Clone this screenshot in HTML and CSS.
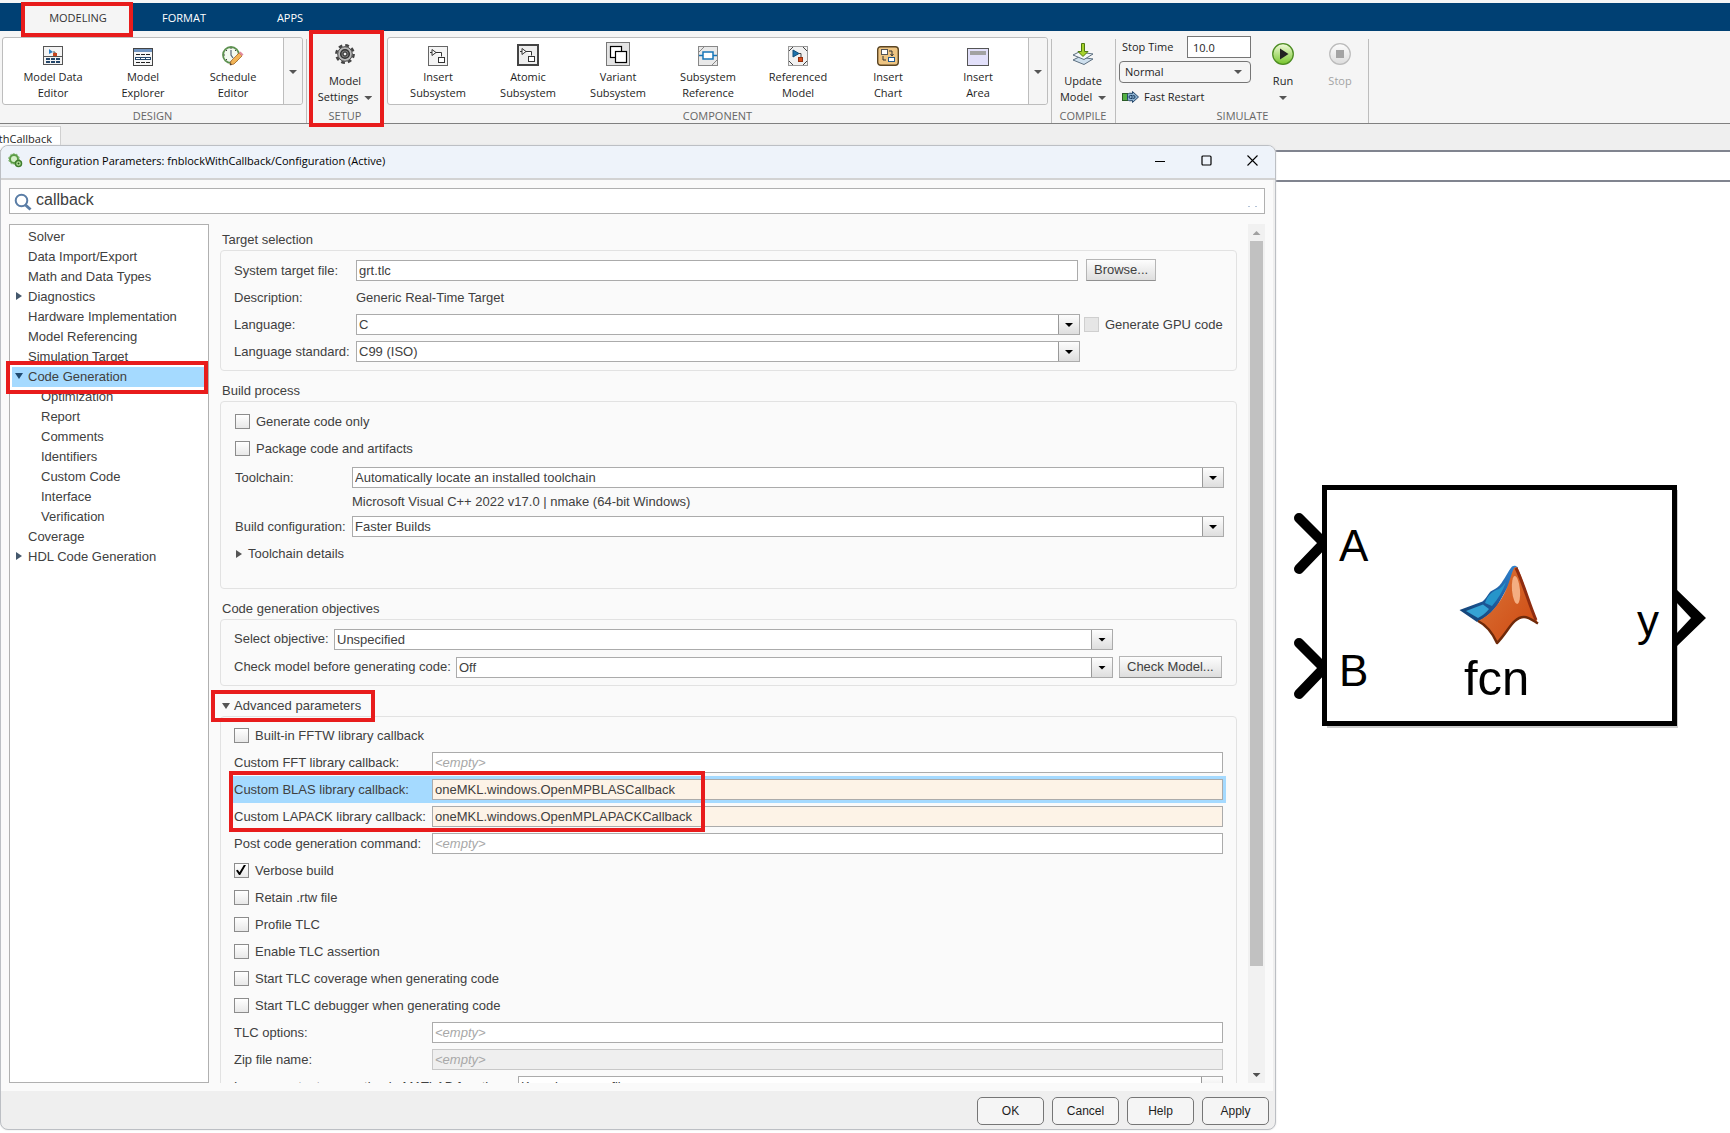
FILE: index.html
```html
<!DOCTYPE html>
<html lang="en">
<head>
<meta charset="utf-8">
<title>Configuration Parameters</title>
<link rel="stylesheet" href="styles.css">
</head>
<body>
<div class="app">
  <nav class="tabs">
    <button class="tab tab-active">MODELING<span class="mark mark-tab"></span></button>
    <button class="tab tab-format">FORMAT</button>
    <button class="tab tab-apps">APPS</button>
  </nav>

  <div class="ribbon">
    <section class="group group-design">
      <div class="gallery">
        <button class="item">
          <svg width="20" height="20" viewBox="0 0 20 20"><rect x=".5" y=".5" width="19" height="18" fill="#f4f4f4" stroke="#555"/><path d="M6 3l4 3-4 2z" fill="#2b7fc4"/><path d="M10 6h2v2" fill="none" stroke="#555"/><rect x="10" y="7" width="4" height="3" fill="#c8431e"/><path d="M1 10.500h18" stroke="#555"/><path d="M3 13h4m1 0h4m1 0h4M3 16h4m1 0h4m1 0h4" stroke="#24476b" stroke-width="2"/></svg>
          <span>Model Data<br>Editor</span></button>
        <button class="item">
          <svg width="20" height="20" viewBox="0 0 20 20"><rect x=".5" y="2.500" width="19" height="17" fill="#f6f6f6" stroke="#444"/><rect x="1" y="3" width="18" height="3" fill="#6f93bf"/><path d="M3 8.500h4m1 0h4m1 0h4M3 16.500h4m1 0h4m1 0h4" stroke="#222"/><rect x="2" y="11" width="16" height="3" fill="#24476b"/><path d="M3 12.500h4m1 0h4m1 0h4" stroke="#fff"/></svg>
          <span>Model<br>Explorer</span></button>
        <button class="item">
          <svg width="22" height="20" viewBox="0 0 22 20"><circle cx="9" cy="9" r="8" fill="#f3faf0" stroke="#5d9150" stroke-width="1.800"/><path d="M9 4v5l2 3" fill="none" stroke="#567" stroke-width="1.200"/><path d="M9 2v1M9 15v1M2 9h1M15 9h1M4 4l1 1M4 14l1-1M14 4l-1 1" stroke="#444"/><path d="M9 15L17 7l3 3-8 8-4 1z" fill="#f2b456" stroke="#a5672a" stroke-width=".8"/><path d="M17 7l1.500-1.500 3 3L20 10z" fill="#e28a9d"/><path d="M8 19l.6-2 1.400 1.500z" fill="#333"/></svg>
          <span>Schedule<br>Editor</span></button>
        <button class="more" aria-label="More design tools"><i class="caret"></i></button>
      </div>
      <h2>DESIGN</h2>
    </section>

    <section class="group group-setup">
      <button class="big">
        <svg width="20" height="20" viewBox="0 0 20 20"><circle cx="10" cy="10" r="8.700" fill="none" stroke="#444" stroke-width="2.400" stroke-dasharray="3.800 3.030"/><circle cx="10" cy="10" r="7.300" fill="#b8b8b8" stroke="#444"/><circle cx="10" cy="10" r="4.300" fill="#777" stroke="#333" stroke-width="1.500"/><circle cx="10" cy="10" r="2" fill="#f2f2f2" stroke="#222"/></svg>
        <span>Model<br>Settings <i class="caret"></i></span>
      </button>
      <h2>SETUP</h2>
      <span class="mark mark-setup"></span>
    </section>

    <section class="group group-component">
      <div class="gallery">
        <button class="item">
          <svg width="20" height="20" viewBox="0 0 20 20"><rect x=".5" y=".5" width="19" height="19" fill="#f4f4f4" stroke="#666"/><path d="M4 3.500v6l4-3zM2 6.500h2M8 6.500h5.500v4" fill="#fff" stroke="#333"/><rect x="10.500" y="11.500" width="6" height="5" fill="#fff" stroke="#333"/></svg>
          <span>Insert<br>Subsystem</span></button>
        <button class="item">
          <svg width="22" height="22" viewBox="0 0 22 22"><rect x="1" y="1" width="20" height="20" fill="#eee" stroke="#444" stroke-width="2"/><path d="M5 4.500v6l4-3zM3 7.500h2M9 7.500h5.500v4" fill="#fff" stroke="#333"/><rect x="11.500" y="12.500" width="6" height="5" fill="#fff" stroke="#333"/></svg>
          <span>Atomic<br>Subsystem</span></button>
        <button class="item">
          <svg width="24" height="24" viewBox="0 0 24 24"><rect x=".5" y=".5" width="23" height="23" fill="#e4e4e4" stroke="#777"/><rect x="4.500" y="4.500" width="11" height="11" fill="#fff" stroke="#000" stroke-width="1.200"/><rect x="9.500" y="9.500" width="11" height="11" fill="#fff" stroke="#000" stroke-width="1.200"/></svg>
          <span>Variant<br>Subsystem</span></button>
        <button class="item">
          <svg width="20" height="20" viewBox="0 0 20 20"><rect x=".5" y=".5" width="19" height="19" fill="#e9e9e9" stroke="#888"/><path d="M1 6l5-5M14 19l5-5" stroke="#888"/><path d="M1 9.500h4M15 9.500h4" stroke="#1676b8" stroke-width="1.500"/><rect x="5" y="6" width="10" height="7" fill="#fff" stroke="#1676b8" stroke-width="1.500"/></svg>
          <span>Subsystem<br>Reference</span></button>
        <button class="item">
          <svg width="20" height="20" viewBox="0 0 20 20"><rect x=".5" y=".5" width="19" height="19" fill="#f1f1f1" stroke="#999"/><path d="M1 5l4-4M15 1l4 4M1 15l4 4M15 19l4-4" stroke="#444"/><path d="M5 4l6 3.500L5 11z" fill="#1c73ad" stroke="#124d78"/><path d="M11 7.500h2v4" fill="none" stroke="#444"/><rect x="10.500" y="11.500" width="4" height="4" fill="#da4c1b" stroke="#92300f"/></svg>
          <span>Referenced<br>Model</span></button>
        <button class="item">
          <svg width="22" height="20" viewBox="0 0 22 20"><rect x=".7" y=".7" width="20.600" height="18.600" rx="3" fill="#eec583" stroke="#5b4523" stroke-width="1.400"/><rect x="4.500" y="3.500" width="6" height="5" fill="#fff" stroke="#555"/><rect x="11.500" y="11.500" width="6" height="4" fill="#fff" stroke="#24588a"/><path d="M12 5h3v4M6 10v4h3M13.500 8l1.500 2 1.500-2" fill="none" stroke="#333"/></svg>
          <span>Insert<br>Chart</span></button>
        <button class="item">
          <svg width="22" height="18" viewBox="0 0 22 18"><rect x=".5" y=".5" width="21" height="17" fill="#e2e0fa" stroke="#555"/><rect x="3" y="3" width="16" height="4" fill="#a2a2a2"/></svg>
          <span>Insert<br>Area</span></button>
        <button class="more" aria-label="More components"><i class="caret"></i></button>
      </div>
      <h2>COMPONENT</h2>
    </section>

    <section class="group group-compile">
      <button class="big">
        <svg width="22" height="22" viewBox="0 0 22 22"><path d="M1 17l6-3 14 2-9 5.500z" fill="#cfe0ee" stroke="#5c6f80"/><path d="M1 12l6-3 14 2-9 5.500z" fill="#f4f7fa" stroke="#5c6f80"/><path d="M9.500.5h3v8h3.500L11 13.500 6 8.500h3.500z" fill="#a6d22c" stroke="#4f7a10"/></svg>
        <span>Update<br>Model <i class="caret"></i></span>
      </button>
      <h2>COMPILE</h2>
    </section>

    <section class="group group-simulate">
      <div class="sim">
        <div class="sim-form">
          <div class="stop-row"><label for="stop">Stop Time</label><input id="stop" value="10.0"></div>
          <div class="mode"><select aria-label="Simulation mode"><option>Normal</option></select><i class="caret"></i></div>
          <button class="fast"><svg width="17" height="12" viewBox="0 0 17 12"><rect x=".5" y="2.500" width="5" height="7" fill="#52b043" stroke="#2b5c27"/><path d="M5.500 3.500c1-1.500 3-1.500 5-1V.5L16.500 6l-6 5.500v-2c-2 .5-4 .5-5-1z" fill="#8fb4d3" stroke="#24476b"/><path d="M10 4.500H8.500a1.500 1.500 0 0 0 0 3H10M10.500 4.500h1a1.500 1.500 0 0 1 0 3h-1M9 6h2.500" fill="none" stroke="#16395c"/></svg>Fast Restart</button>
        </div>
        <button class="big run">
          <svg width="22" height="22" viewBox="0 0 22 22"><defs><linearGradient id="g" x2="0" y2="1"><stop stop-color="#f2fbdc"/><stop offset="1" stop-color="#76c52a"/></linearGradient><linearGradient id="s" x2="0" y2="1"><stop stop-color="#fdfdfd"/><stop offset="1" stop-color="#dcdcdc"/></linearGradient></defs><circle cx="11" cy="11" r="10.300" fill="url(#g)" stroke="#4d8d22" stroke-width="1.300"/><path d="M8 5.500l8.500 5.500L8 16.500z" fill="#222"/></svg>
          <span>Run<br><i class="caret"></i></span>
        </button>
        <button class="big stop" disabled>
          <svg width="22" height="22" viewBox="0 0 22 22"><circle cx="11" cy="11" r="10.300" fill="url(#s)" stroke="#bbb" stroke-width="1.200"/><rect x="7" y="7" width="8" height="8" fill="#a3a3a3"/></svg>
          <span>Stop</span>
        </button>
      </div>
      <h2>SIMULATE</h2>
    </section>
  </div>

  <div class="docbar"><div class="doctab"><span>thCallback</span></div></div>
  <div class="pathbar"></div>

  <main class="canvas">
    <svg class="block" width="420" height="260" viewBox="1290 475 420 260">
      <rect x="1327" y="490" width="351" height="238" fill="#ccc"/>
      <path d="M1299 518l25 25-25 26M1299 643l25 25-25 26" fill="none" stroke="#000" stroke-width="10" stroke-linecap="round"/>
      <path d="M1676 589l30 29-30 29v-13l15-16-15-16z"/>
      <rect x="1324.500" y="487.500" width="350" height="236" fill="#fff" stroke="#000" stroke-width="5"/>
      <defs>
        <linearGradient id="orange" x1="0" y1="0" x2="1" y2="1"><stop stop-color="#d9763a"/><stop offset="1" stop-color="#cf470f"/></linearGradient>
        <linearGradient id="blue" x1="1" y1="0" x2="0" y2="1"><stop stop-color="#2f86d2"/><stop offset=".5" stop-color="#1f5c9e"/><stop offset="1" stop-color="#123f70"/></linearGradient>
      </defs>
      <path d="M1459.500 610l23-8.500c4-3 5-7 8-10 3-2 6-3 9-6 5-6 9-15 12.500-19 2-1.500 4-1 6 1l-6 12-14 25c-6 8-13 14-21 17.500z" fill="url(#blue)"/>
      <path d="M1466 611l17-6.500 6 4.500c-3 4-7 7-11 9z" fill="#35a3d4"/>
      <path d="M1485 603c3-9 8-12 14-14 3-2 4-4 7-7-3 9-8 17-14 24z" fill="#2695ca"/>
      <path d="M1478 621c12-5 21-17 26-27 5-9 7-20 10-26 2-2 3-1 4 1 6 13 12 36 20 54.500-5-3-9-6.500-14-6.500-11 0-16 15-27 26-4-9-9-17-19-22z" fill="url(#orange)"/>
      <path d="M1478 621c10 5 15 13 19 22 11-11 16-26 27-26 5 0 9 3.500 14 6.500" fill="none" stroke="#6f2a0a" stroke-width="2.500" stroke-linejoin="round"/>
      <path d="M1516 568c7 14 13 36 20 52" stroke="#8f2c10" stroke-width="3" fill="none"/>
      <ellipse cx="1516" cy="590" rx="4" ry="14" fill="#f4ae82" transform="rotate(-5 1516 590)"/>
      <g font-family="Liberation Sans, Arial, sans-serif" font-size="44">
        <text x="1339" y="561">A</text><text x="1339" y="686">B</text><text x="1637" y="636">y</text>
        <text x="1464" y="695" font-size="49">fcn</text>
      </g>
    </svg>
  </main>
</div>

<div class="dialog" role="dialog" aria-label="Configuration Parameters">
  <header class="titlebar">
    <svg width="15" height="15" viewBox="0 0 15 15"><circle cx="6" cy="6" r="4" fill="#d5efc8" stroke="#5b9c45" stroke-width="2"/><circle cx="6" cy="6" r="5.300" fill="none" stroke="#76ad62" stroke-dasharray="2 1.300"/><circle cx="10.500" cy="10.500" r="3" fill="#b7e39d" stroke="#3f7d2c" stroke-width="1.500"/><circle cx="10.500" cy="10.500" r="1" fill="#29561d"/></svg>
    <span class="title">Configuration Parameters: fnblockWithCallback/Configuration (Active)</span>
    <button aria-label="Minimize"><svg width="11" height="11" viewBox="0 0 11 11"><path d="M0 6.500h10" stroke="#000"/></svg></button>
    <button aria-label="Maximize"><svg width="11" height="11" viewBox="0 0 11 11"><rect x="1" y="1" width="9" height="9" rx="1" fill="none" stroke="#000" stroke-width="1.200"/></svg></button>
    <button aria-label="Close"><svg width="11" height="11" viewBox="0 0 11 11"><path d="M.5.5l10 10M10.500.5l-10 10" stroke="#000" stroke-width="1.100"/></svg></button>
  </header>

  <div class="body">
    <div class="search">
      <svg width="18" height="18" viewBox="0 0 18 18"><circle cx="7.500" cy="7.500" r="5.800" fill="#fff" stroke="#5a7da6" stroke-width="2"/><path d="M11.500 12l5 4.500" stroke="#5a7da6" stroke-width="3"/></svg>
      <input aria-label="Search" value="callback">
      <svg class="dots" width="12" height="20" viewBox="0 0 12 20"><path d="M1 17.500h2M8 17.500h2" stroke="#b3c3d8"/></svg>
    </div>

    <div class="columns">
      <ul class="tree">
        <li>Solver</li>
        <li>Data Import/Export</li>
        <li>Math and Data Types</li>
        <li class="closed">Diagnostics</li>
        <li>Hardware Implementation</li>
        <li>Model Referencing</li>
        <li>Simulation Target</li>
        <li class="open selected">Code Generation<span class="mark mark-tree"></span></li>
        <li class="child">Optimization</li>
        <li class="child">Report</li>
        <li class="child">Comments</li>
        <li class="child">Identifiers</li>
        <li class="child">Custom Code</li>
        <li class="child">Interface</li>
        <li class="child">Verification</li>
        <li>Coverage</li>
        <li class="closed">HDL Code Generation</li>
      </ul>

      <div class="pane">
        <h3 class="first">Target selection</h3>
        <div class="box target">
          <div class="row"><label for="stf">System target file:</label><input class="field" id="stf" value="grt.tlc"><div class="side side-browse"><button class="btn">Browse...</button></div></div>
          <div class="row"><span class="label">Description:</span><span>Generic Real-Time Target</span></div>
          <div class="row"><label for="lang">Language:</label><div class="combo"><select id="lang"><option>C</option></select></div><div class="side"><input type="checkbox" id="gpu" disabled><label class="tick" for="gpu">Generate GPU code</label></div></div>
          <div class="row"><label for="std">Language standard:</label><div class="combo"><select id="std"><option>C99 (ISO)</option></select></div><div class="side"></div></div>
        </div>

        <h3>Build process</h3>
        <div class="box build">
          <div class="row"><input type="checkbox" id="gco"><label class="tick" for="gco">Generate code only</label></div>
          <div class="row"><input type="checkbox" id="pca"><label class="tick" for="pca">Package code and artifacts</label></div>
          <div class="row spaced"><label for="tc">Toolchain:</label><div class="combo"><select id="tc"><option>Automatically locate an installed toolchain</option></select></div></div>
          <div class="row low"><span class="label"></span><span>Microsoft Visual C++ 2022 v17.0 | nmake (64-bit Windows)</span></div>
          <div class="row"><label for="bc">Build configuration:</label><div class="combo"><select id="bc"><option>Faster Builds</option></select></div></div>
          <div class="row"><button class="details">Toolchain details</button></div>
        </div>

        <h3>Code generation objectives</h3>
        <div class="box objectives">
          <div class="row"><label for="so">Select objective:</label><div class="combo"><select id="so"><option>Unspecified</option></select></div><div class="side"></div></div>
          <div class="row"><label class="wide" for="cm">Check model before generating code:</label><div class="combo"><select id="cm"><option>Off</option></select></div><div class="side"><button class="btn">Check Model...</button></div></div>
        </div>

        <h3 class="advanced-title"><button>Advanced parameters</button><span class="mark mark-advanced"></span></h3>
        <div class="box advanced">
          <div class="row"><input type="checkbox" id="fftw"><label class="tick" for="fftw">Built-in FFTW library callback</label></div>
          <div class="row"><label for="fft">Custom FFT library callback:</label><input class="field" id="fft" placeholder="&lt;empty&gt;"></div>
          <div class="row hit"><label for="blas">Custom BLAS library callback:</label><input class="field changed" id="blas" value="oneMKL.windows.OpenMPBLASCallback"><span class="mark mark-callbacks"></span></div>
          <div class="row"><label for="lapack">Custom LAPACK library callback:</label><input class="field changed" id="lapack" value="oneMKL.windows.OpenMPLAPACKCallback"></div>
          <div class="row"><label for="post">Post code generation command:</label><input class="field" id="post" placeholder="&lt;empty&gt;"></div>
          <div class="row"><input type="checkbox" id="vb" checked><label class="tick" for="vb">Verbose build</label></div>
          <div class="row"><input type="checkbox" id="rtw"><label class="tick" for="rtw">Retain .rtw file</label></div>
          <div class="row"><input type="checkbox" id="prof"><label class="tick" for="prof">Profile TLC</label></div>
          <div class="row"><input type="checkbox" id="asrt"><label class="tick" for="asrt">Enable TLC assertion</label></div>
          <div class="row"><input type="checkbox" id="cov"><label class="tick" for="cov">Start TLC coverage when generating code</label></div>
          <div class="row"><input type="checkbox" id="dbg"><label class="tick" for="dbg">Start TLC debugger when generating code</label></div>
          <div class="row"><label for="tlc">TLC options:</label><input class="field" id="tlc" placeholder="&lt;empty&gt;"></div>
          <div class="row"><label for="zip">Zip file name:</label><input class="field" id="zip" placeholder="&lt;empty&gt;" disabled></div>
          <div class="row"><label class="wide" for="lcg">Large constant generation in MATLAB functions:</label><div class="combo"><select id="lcg"><option>Keep in source files</option></select></div></div>
        </div>
      </div>

      <div class="scrollbar"><i class="up"></i><div class="thumb"></div><i class="down"></i></div>
    </div>
  </div>

  <footer><button>OK</button><button>Cancel</button><button>Help</button><button>Apply</button></footer>
</div>
</body>
</html>
```
FILE: styles.css
```css
* { box-sizing: border-box; }
body { margin: 0; min-height: 100vh; position: relative; overflow: hidden; font: 13px/20px "Liberation Sans", Arial, sans-serif; color: #404040; background: #fff; }
button, input, select { font: inherit; color: inherit; margin: 0; }
button { padding: 0; border: 0; background: none; }
h2, h3, ul { margin: 0; padding: 0; font-weight: normal; }
svg { display: block; flex: none; }

.app { display: flex; flex-direction: column; min-height: 100vh; font: 11px/16px "Open Sans", "Noto Sans", sans-serif; color: #1e1e1e; }

/* red highlight frames drawn over the interface */
.mark { position: absolute; border: 4px solid #e81c1c; pointer-events: none; z-index: 2; }
.mark-tab { inset: -4px -4px -6px -4px; }
.mark-setup { inset: -1px 0 -4px 2px; }
.mark-tree { inset: -6px -2px -7px -6px; }
.mark-advanced { left: -9px; top: 4px; width: 164px; height: 32px; }
.mark-callbacks { left: -2px; top: -5px; width: 476px; height: 61px; }

/* tab strip */
.tabs { display: flex; height: 31px; padding-left: 25px; border-top: 3px solid #f5f5f5; background: #004073; color: #fff; }
.tab { height: 28px; padding-top: 1px; }
.tab-active { position: relative; width: 104px; margin-top: 3px; height: 25px; padding: 0 0 2px 2px; background: #f5f5f5; color: #333; }
.tab-format { width: 110px; }
.tab-apps { width: 102px; }

/* ribbon */
.ribbon { display: flex; height: 93px; background: #f5f5f5; border-bottom: 1px solid #808080; }
.group { position: relative; display: flex; flex-direction: column; justify-content: space-between; padding-top: 6px; }
.group::after { content: ""; position: absolute; right: 0; top: 8px; bottom: 0; width: 1px; background: #bdbdbd; }
.group h2 { font-size: 11px; line-height: 14px; color: #666; text-align: center; }
.group-design { width: 307px; padding-left: 2px; padding-right: 4px; }
.group-setup { width: 77px; padding-right: 1px; }
.group-setup::after { display: none; }
.group-component { width: 668px; padding-left: 3px; padding-right: 4px; }
.group-compile { width: 64px; padding-right: 2px; }
.group-simulate { width: 253px; }
.gallery { display: flex; height: 68px; padding-left: 5px; border: 1px solid #bdbdbd; border-radius: 3px; background: #fff; }
.item { width: 90px; display: flex; flex-direction: column; justify-content: flex-end; align-items: center; gap: 3px; padding-bottom: 3px; }
.more { margin-left: auto; width: 19px; border-left: 1px solid #bdbdbd; background: #f5f5f5; border-radius: 0 3px 3px 0; }
.caret { display: inline-block; width: 8px; height: 4px; background: #555; clip-path: polygon(0 0, 100% 0, 50% 100%); vertical-align: middle; }
.big { display: flex; flex-direction: column; align-items: center; gap: 8px; padding-top: 6px; }
.group-setup .big { gap: 9px; padding-top: 7px; }
.big span { white-space: nowrap; }
.big .caret { margin-left: 3px; }
.sim { display: flex; }
.sim-form { width: 135px; padding-left: 3px; display: flex; flex-direction: column; gap: 3px; }
.stop-row { display: flex; justify-content: space-between; align-items: center; padding-left: 3px; margin-top: -1px; }
.stop-row input { width: 64px; height: 22px; padding: 0 5px; border: 1px solid #767676; background: #fff; }
.mode { position: relative; }
.mode select { display: block; width: 100%; height: 22px; padding: 0 5px; appearance: none; border: 1px solid #767676; border-radius: 4px; background: #f5f5f5; }
.mode .caret { position: absolute; right: 9px; top: 9px; }
.fast { display: flex; align-items: center; gap: 5px; height: 22px; padding-left: 3px; }
.run { width: 64px; }
.run .caret { margin-left: 0; }
.stop { width: 50px; color: #a3a3a3; }

/* open document tab, partly scrolled off to the left */
.docbar { height: 26px; padding-top: 2px; background: #efefef; }
.doctab { width: 61px; height: 24px; padding: 4px 8px 0 0; overflow: hidden; display: flex; justify-content: flex-end; background: #fff; border: 1px solid #d0d0d0; border-width: 1px 1px 0 0; }
.pathbar { height: 32px; background: #fff; border: 2px solid #80848f; border-width: 2px 0; }
.canvas { position: relative; flex: 1; background: #fff; }
.block { position: absolute; left: 1290px; top: 293px; }

/* dialog window */
.dialog { position: absolute; left: 0; right: 454px; top: 145px; bottom: 3px; display: flex; flex-direction: column; border: 1px solid #bcbfc4; border-radius: 8px; background: #efefef; overflow: hidden; box-shadow: 0 0 2px #ddd; }
.titlebar { display: flex; align-items: center; height: 34px; padding: 0 0 3px 7px; border-bottom: 2px solid #d2d2d2; background: #eef3fa; font: 11px/16px "Open Sans", "Noto Sans", sans-serif; color: #000; }
.title { flex: 1; padding-left: 6px; }
.titlebar button { width: 46px; height: 30px; display: flex; align-items: center; justify-content: center; }
.body { flex: 1; min-height: 0; display: flex; flex-direction: column; gap: 10px; margin-right: 2px; padding: 8px; background: #fafafa; }
.search { display: flex; height: 26px; border: 1px solid #b0b0b0; background: #fff; padding: 0 5px 0 4px; }
.search svg { margin-top: 4px; }
.search .dots { margin-top: 0; }
.search input { flex: 1; height: 22px; border: 0; padding: 0 4px; background: none; font-size: 16px; }
.columns { flex: 1; min-height: 0; display: flex; }
.tree { width: 200px; flex: none; margin-right: 2px; padding: 2px; list-style: none; background: #fff; border: 1px solid #b0b0b0; }
.tree li { position: relative; height: 20px; padding-left: 16px; }
.tree .child { padding-left: 29px; }
.selected { background: #a5daff; }
.closed::before, .open::before { content: ""; position: absolute; left: 4px; top: 5px; width: 6px; height: 8px; background: #44586c; clip-path: polygon(0 0, 100% 50%, 0 100%); }
.open::before { left: 3px; top: 6px; width: 8px; height: 6px; background: #1f4a70; clip-path: polygon(0 0, 100% 0, 50% 100%); }

/* parameter groups */
.pane { flex: 1; min-width: 0; overflow: hidden; padding-left: 9px; }
.pane h3 { height: 30px; font-size: 13px; line-height: 22px; padding: 9px 0 0 2px; }
.pane h3.first { padding-top: 5px; height: 26px; }
.advanced-title { position: relative; }
.advanced-title button, .details { display: flex; align-items: center; gap: 4px; line-height: 22px; }
.advanced-title button::before { content: ""; width: 8px; height: 6px; background: #555; clip-path: polygon(0 0, 100% 0, 50% 100%); }
.details { gap: 6px; }
.details::before { content: ""; width: 6px; height: 8px; margin-left: 1px; background: #555; clip-path: polygon(0 0, 100% 50%, 0 100%); }
.box { padding: 6px 12px 5px 13px; border: 1px solid #e2e2e2; border-radius: 4px; }
.row { position: relative; display: flex; align-items: center; height: 27px; white-space: nowrap; }
.row > label, .label { flex: none; }
.field, .combo { flex: 1; min-width: 0; height: 21px; }
.field { padding: 0 2px; border: 1px solid #ababab; background: #fff; }
.field::placeholder { color: #a8a8a8; font-style: italic; opacity: 1; }
.field:disabled { background: #efefef; border-color: #c8c8c8; }
.changed { background: #fdf3e7; }
.combo { position: relative; }
.combo select { display: block; width: 100%; height: 21px; padding: 0 2px; appearance: none; border: 1px solid #ababab; border-radius: 0; background: #fff; }
.combo::before { content: ""; position: absolute; right: 1px; top: 1px; width: 20px; height: 19px; border-left: 1px solid #999; background: linear-gradient(#fdfdfd, #dedede); pointer-events: none; }
.combo::after { content: ""; position: absolute; right: 7px; top: 9px; width: 8px; height: 4px; background: #000; clip-path: polygon(0 0, 100% 0, 50% 100%); pointer-events: none; }
input[type="checkbox"] { flex: none; width: 15px; height: 15px; appearance: none; border: 1px solid #8c8c8c; background: linear-gradient(#fff, #e8e8e8); }
input[type="checkbox"]:checked::after { content: ""; display: block; width: 10px; height: 10px; margin: 1px; background: #000; clip-path: polygon(0 55%, 18% 48%, 35% 72%, 78% 0, 100% 0, 42% 100%, 30% 100%); }
input[type="checkbox"]:disabled { border-color: #cfcfcf; background: #e6e6e6; }
.row .tick { width: auto; padding-left: 6px; }
.side { display: flex; align-items: center; flex: none; }
.btn { height: 22px; margin-bottom: 1px; border: 1px solid #b5b5b5; border-bottom-color: #909090; background: linear-gradient(#fdfdfd, #dedede); padding: 0 7px 1px; }

.target .row > label, .target .label { width: 122px; }
.target .side { width: 144px; padding-left: 4px; }
.target .side-browse { width: 146px; padding-left: 8px; }
.build { padding-left: 14px; padding-bottom: 20px; }
.build .row > label:not(.tick), .build .label { width: 117px; }
.build .spaced { margin-top: 2px; }
.build .low { height: 22px; }
.build .row:last-child { height: 28px; }
.objectives { padding-top: 5px; padding-bottom: 4px; }
.objectives .row { height: 28px; }
.objectives .row > label { width: 100px; }
.objectives .row > .wide { width: 222px; }
.objectives .side { width: 111px; padding-left: 6px; }
.advanced { padding-top: 5px; padding-right: 13px; }
.advanced .row > label:not(.tick) { width: 198px; }
.advanced .row > label.wide:not(.tick) { width: 284px; }
.advanced .hit { margin: 0 -3px; padding: 0 3px; background: #a5daff; }

.scrollbar { width: 17px; flex: none; margin-left: 11px; padding: 0 2px; display: flex; flex-direction: column; align-items: center; background: #f1f1f1; }
.thumb { width: 13px; flex: 0 1 725px; background: #c1c1c1; }
.up, .down { width: 8px; height: 4px; margin: 7px 0 6px; background: #a0a0a0; clip-path: polygon(50% 0, 100% 100%, 0 100%); }
.down { margin-top: auto; background: #505050; clip-path: polygon(0 0, 100% 0, 50% 100%); }

footer { display: flex; justify-content: flex-end; gap: 8px; padding: 6px 6px 4px; font-size: 12px; color: #1e1e1e; }
footer button { width: 67px; height: 28px; border: 1px solid #767676; border-radius: 5px; background: #f5f5f5; }
```
